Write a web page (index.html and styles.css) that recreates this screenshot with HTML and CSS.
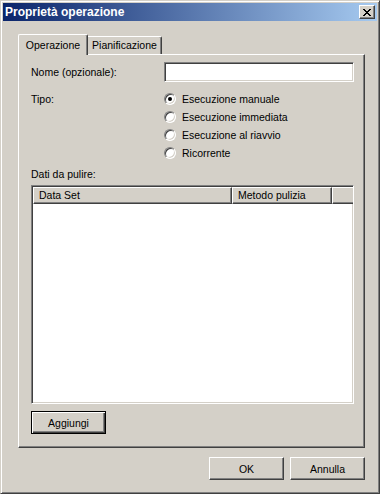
FILE: index.html
```html
<!DOCTYPE html>
<html lang="it">
<head>
<meta charset="utf-8">
<title>Proprietà operazione</title>
<link rel="stylesheet" href="styles.css">
</head>
<body>
<div class="window">
  <div class="titlebar">
    <span class="title">Proprietà operazione</span>
    <button class="close" aria-label="Chiudi">
      <svg width="8" height="7" viewBox="0 0 8 7" shape-rendering="crispEdges">
        <path fill="#000" d="M0 0h2v1H0zM6 0h2v1H6zM1 1h2v1H1zM5 1h2v1H5zM2 2h4v1H2zM3 3h2v1H3zM2 4h4v1H2zM1 5h2v1H1zM5 5h2v1H5zM0 6h2v1H0zM6 6h2v1H6z"/>
      </svg>
    </button>
  </div>
  <div class="content">
    <div class="tabs">
      <div class="tab active">Operazione</div>
      <div class="tab inactive">Pianificazione</div>
    </div>
    <div class="panel">
      <div class="form">
        <div class="lbl">Nome (opzionale):</div>
        <div class="input"></div>
        <div class="lbl tipo">Tipo:</div>
        <div class="radios">
          <div class="radio"><span class="circle checked"></span>Esecuzione manuale</div>
          <div class="radio"><span class="circle"></span>Esecuzione immediata</div>
          <div class="radio"><span class="circle"></span>Esecuzione al riavvio</div>
          <div class="radio"><span class="circle"></span>Ricorrente</div>
        </div>
      </div>
      <div class="lbl dati">Dati da pulire:</div>
      <div class="list">
        <div class="header">
          <div class="col c1">Data Set</div>
          <div class="col c2">Metodo pulizia</div>
          <div class="col c3"></div>
        </div>
        <div class="rows"></div>
      </div>
      <button class="btn default">Aggiungi</button>
    </div>
    <div class="footer">
      <button class="btn">OK</button>
      <button class="btn">Annulla</button>
    </div>
  </div>
</div>
</body>
</html>
```
FILE: styles.css
```css
html, body {
  margin: 0;
  padding: 0;
  background: #d4d0c8;
}
body {
  font-family: "Liberation Sans", Arial, sans-serif;
  font-size: 10.5px;
  color: #000;
}
.window {
  width: 380px;
  height: 494px;
  box-sizing: border-box;
  border: 1px solid;
  border-color: #d4d0c8 #404040 #404040 #d4d0c8;
  box-shadow: inset 1px 1px #fff, inset -1px -1px #808080;
  padding: 2px;
  background: #d4d0c8;
  display: flex;
  flex-direction: column;
}
.titlebar {
  height: 18px;
  flex: none;
  display: flex;
  align-items: center;
  justify-content: space-between;
  padding: 0 2px 0 2px;
  background: linear-gradient(to right, #0a246a, #a6caf0);
}
.title {
  color: #fff;
  font-weight: bold;
  font-size: 12px;
  line-height: 14px;
}
.close {
  width: 16px;
  height: 14px;
  box-sizing: border-box;
  padding: 0;
  margin: 0;
  background: #d4d0c8;
  border: 1px solid;
  border-color: #fff #404040 #404040 #fff;
  box-shadow: inset -1px -1px #808080;
  display: flex;
  align-items: center;
  justify-content: center;
}
.close svg {
  display: block;
  margin: 0 1px 0 0;
}
.content {
  flex: 1;
  padding: 13px 12px 0 15px;
  display: flex;
  flex-direction: column;
}
.tabs {
  display: flex;
  align-items: flex-end;
  height: 20px;
}
.tab {
  box-sizing: border-box;
  border-top: 1px solid #fff;
  border-left: 1px solid #fff;
  border-right: 1px solid #404040;
  box-shadow: inset -1px 0 #808080;
  border-radius: 2px 2px 0 0;
  display: flex;
  justify-content: center;
  background: #d4d0c8;
  line-height: 13px;
}
.tab.active {
  width: 70px;
  height: 21px;
  margin-bottom: -1px;
  padding-top: 4px;
  position: relative;
  z-index: 1;
}
.tab.inactive {
  width: 74px;
  height: 18px;
  padding-top: 2px;
  border-left: none;
  border-top-left-radius: 0;
}
.panel {
  height: 394px;
  box-sizing: border-box;
  border: 1px solid;
  border-color: #fff #404040 #404040 #fff;
  box-shadow: inset -1px -1px #808080;
  padding: 7px 10px 13px 12px;
  display: flex;
  flex-direction: column;
  align-items: flex-start;
}
.form {
  display: grid;
  grid-template-columns: 133px 190px;
  row-gap: 8px;
}
.lbl {
  line-height: 13px;
}
.form > .lbl:first-child {
  align-self: center;
}
.tipo {
  padding-top: 3px;
}
.input {
  height: 20px;
  box-sizing: border-box;
  background: #fff;
  border: 1px solid;
  border-color: #808080 #fff #fff #808080;
  box-shadow: inset 1px 1px #404040, inset -1px -1px #d4d0c8;
}
.radios {
  display: flex;
  flex-direction: column;
}
.radio {
  height: 18px;
  display: flex;
  align-items: center;
  line-height: 13px;
}
.circle {
  width: 12px;
  height: 12px;
  box-sizing: border-box;
  border-radius: 50%;
  border: 1px solid;
  border-color: #808080 #fff #fff #808080;
  box-shadow: inset 1px 1px #404040, inset -1px -1px #d4d0c8;
  background: #fff;
  margin-right: 6px;
  display: flex;
  align-items: center;
  justify-content: center;
  flex: none;
}
.circle.checked::after {
  content: "";
  width: 4px;
  height: 4px;
  border-radius: 50%;
  background: #000;
}
.dati {
  margin-top: 6px;
}
.list {
  margin-top: 4px;
  width: 323px;
  height: 219px;
  box-sizing: border-box;
  background: #fff;
  border: 1px solid;
  border-color: #808080 #fff #fff #808080;
  box-shadow: inset 1px 1px #404040, inset -1px -1px #d4d0c8;
  padding: 1px 0 1px 1px;
  display: flex;
  flex-direction: column;
}
.header {
  display: flex;
  height: 17px;
  flex: none;
}
.col {
  box-sizing: border-box;
  background: #d4d0c8;
  border-top: 1px solid #fff;
  border-left: 1px solid #fff;
  border-right: 1px solid #404040;
  border-bottom: 1px solid #404040;
  box-shadow: inset -1px -1px #808080;
  padding-left: 5px;
  line-height: 14px;
  white-space: nowrap;
}
.c1 { width: 199px; }
.c2 { width: 100px; }
.c3 {
  flex: 1;
  border-right: none;
  box-shadow: inset 0 -1px #808080;
}
.rows {
  flex: 1;
}
.btn {
  width: 75px;
  height: 23px;
  box-sizing: border-box;
  margin: 0;
  padding: 0;
  font: inherit;
  color: #000;
  background: #d4d0c8;
  border: 1px solid;
  border-color: #fff #404040 #404040 #fff;
  box-shadow: inset -1px -1px #808080;
}
.btn.default {
  margin-top: 7px;
  border-color: #000;
  box-shadow: inset 1px 1px #fff, inset -1px -1px #404040, inset -2px -2px #808080;
}
.footer {
  margin-top: 9px;
  display: flex;
  justify-content: flex-end;
  gap: 6px;
}
```
